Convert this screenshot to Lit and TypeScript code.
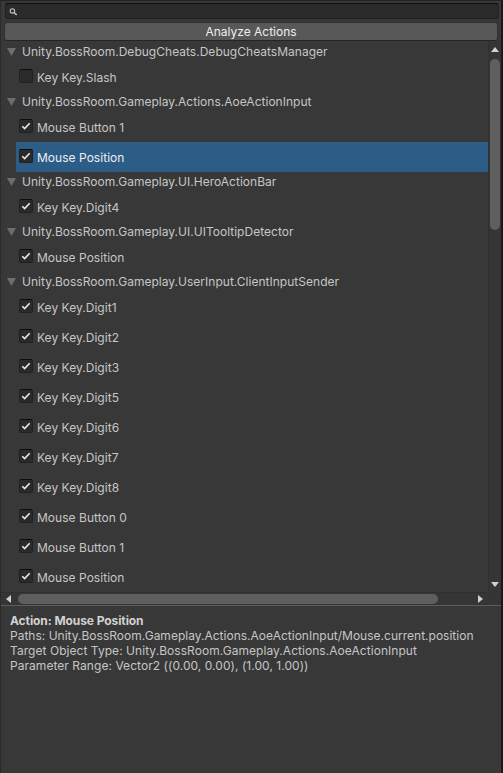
import { LitElement, html, css, svg } from "lit";
import { customElement, property } from "lit/decorators.js";

interface Item { label: string; checked: boolean; selected?: boolean; }
interface Group { name: string; items: Item[]; }

const on = (label: string, selected = false): Item => ({ label, checked: true, selected });

const GROUPS: Group[] = [
  { name: "Unity.BossRoom.DebugCheats.DebugCheatsManager", items: [{ label: "Key Key.Slash", checked: false }] },
  { name: "Unity.BossRoom.Gameplay.Actions.AoeActionInput", items: [on("Mouse Button 1"), on("Mouse Position", true)] },
  { name: "Unity.BossRoom.Gameplay.UI.HeroActionBar", items: [on("Key Key.Digit4")] },
  { name: "Unity.BossRoom.Gameplay.UI.UITooltipDetector", items: [on("Mouse Position")] },
  {
    name: "Unity.BossRoom.Gameplay.UserInput.ClientInputSender",
    items: [
      ...[1, 2, 3, 5, 6, 7, 8].map((n) => on(`Key Key.Digit${n}`)),
      on("Mouse Button 0"), on("Mouse Button 1"), on("Mouse Position"),
    ],
  },
];

@customElement("check-box")
export class CheckBox extends LitElement {
  @property({ type: Boolean }) checked = false;
  static styles = css`
    :host { display: block; width: 14px; height: 14px; flex: none; }
    .box {
      box-sizing: border-box; width: 14px; height: 14px; border-radius: 2px;
      background: #2a2a2a; border: 1px solid #212121; border-top-color: #0d0d0d;
    }
    svg { display: block; }
  `;
  render() {
    return html`<div class="box">
      ${this.checked
        ? html`<svg width="12" height="12" viewBox="0 0 12 12">
            ${svg`<path d="M2.3 6.2 L4.6 8.5 L9.7 3.3" fill="none" stroke="#e8e8e8" stroke-width="1.6"/>`}
          </svg>`
        : null}
    </div>`;
  }
}

@customElement("app-root")
export class AppRoot extends LitElement {
  static styles = css`
    :host {
      display: flex; flex-direction: column; box-sizing: border-box;
      width: 503px; height: 773px; overflow: hidden;
      background: #383838; color: #c6c6c6;
      border-left: 1px solid #2b2b2b; border-right: 2px solid #191919;
      border-top: 1px solid #232323;
      font: 12px/15px Inter, "Liberation Sans", sans-serif;
      white-space: nowrap;
    }
    .search {
      box-sizing: border-box; height: 16px; margin: 2px 2px 0 4px; flex: none;
      border: 1px solid #212121; border-top-color: #0d0d0d; border-radius: 3px;
      background: #2a2a2a;
    }
    .search svg { display: block; margin: 4px 0 0 3px; }
    .analyze {
      box-sizing: border-box; height: 19px; margin: 3px 3px 0 3px; flex: none;
      border: 1px solid #303030; border-bottom-color: #242424; border-radius: 3px;
      background: #585858; color: #eeeeee; text-align: center; line-height: 17px;
    }
    .scroll {
      flex: none; height: 563px; margin-top: 1px;
      display: grid; grid-template-columns: 1fr 13px; grid-template-rows: 550px 13px;
    }
    .list { overflow: hidden; }
    .group { display: flex; align-items: center; height: 20px; padding-left: 6px; }
    .group svg { flex: none; margin-right: 6px; }
    .group .name { padding-bottom: 1px; letter-spacing: 0.02px; }
    .item {
      display: flex; align-items: center; box-sizing: border-box;
      height: 30px; margin-left: 15px; padding-left: 3px; letter-spacing: 0.03px;
    }
    .item check-box { margin: -2px 4px 0 0; }
    .item.selected { background: #2c5d87; color: #eeeeee; }
    .bar { display: flex; align-items: center; background: #353535; }
    .bar svg { flex: none; display: block; }
    .vbar { flex-direction: column; border-left: 1px solid #303030; }
    .hbar { border-top: 1px solid #303030; }
    .thumb { background: #5f5f5f; border-radius: 5px; flex: none; }
    .vbar .thumb { width: 10px; height: 171px; margin-top: 7px; }
    .vbar .up { margin-top: 5px; }
    .vbar .down { margin-top: auto; margin-bottom: 5px; }
    .hbar .thumb { width: 420px; height: 10px; margin-left: 7px; }
    .hbar .left { margin-left: 5px; }
    .hbar .right { margin-left: auto; margin-right: 5px; }
    .corner { background: #353535; }
    .details { border-top: 1px solid #5c5c5c; padding: 7px 0 0 9px; flex: 1; letter-spacing: 0.05px; }
    .title { font-weight: 700; color: #d2d2d2; letter-spacing: -0.08px; }
    .paths { letter-spacing: 0.01px; }
  `;

  render() {
    return html`
      <div class="search">
        <svg width="10" height="9" viewBox="0 0 10 9">
          <circle cx="3.4" cy="2.9" r="2.2" fill="none" stroke="#c4c4c4" stroke-width="1.1" />
          <path d="M5 4.5 L7.7 7" stroke="#c4c4c4" stroke-width="1.5" />
        </svg>
      </div>
      <div class="analyze">Analyze Actions</div>
      <div class="scroll">
        <div class="list">
          ${GROUPS.map((g) => html`
            <div class="group">
              <svg width="9" height="8" viewBox="0 0 9 8"><path d="M0 0H9L4.5 8Z" fill="#6d6d6d" /></svg>
              <span class="name">${g.name}</span>
            </div>
            ${g.items.map((i) => html`
              <div class="item ${i.selected ? "selected" : ""}">
                <check-box ?checked=${i.checked}></check-box><span>${i.label}</span>
              </div>`)}
          `)}
        </div>
        <div class="bar vbar">
          <svg class="up" width="8" height="5" viewBox="0 0 8 5"><path d="M4 0L8 5H0Z" fill="#d0d0d0" /></svg>
          <div class="thumb"></div>
          <svg class="down" width="8" height="5" viewBox="0 0 8 5"><path d="M0 0H8L4 5Z" fill="#d0d0d0" /></svg>
        </div>
        <div class="bar hbar">
          <svg class="left" width="5" height="8" viewBox="0 0 5 8"><path d="M5 0V8L0 4Z" fill="#d0d0d0" /></svg>
          <div class="thumb"></div>
          <svg class="right" width="5" height="8" viewBox="0 0 5 8"><path d="M0 0V8L5 4Z" fill="#d0d0d0" /></svg>
        </div>
        <div class="corner"></div>
      </div>
      <div class="details">
        <div class="title">Action: Mouse Position</div>
        <div class="paths">Paths: Unity.BossRoom.Gameplay.Actions.AoeActionInput/Mouse.current.position</div>
        <div>Target Object Type: Unity.BossRoom.Gameplay.Actions.AoeActionInput</div>
        <div>Parameter Range: Vector2 ((0.00, 0.00), (1.00, 1.00))</div>
      </div>
    `;
  }
}
